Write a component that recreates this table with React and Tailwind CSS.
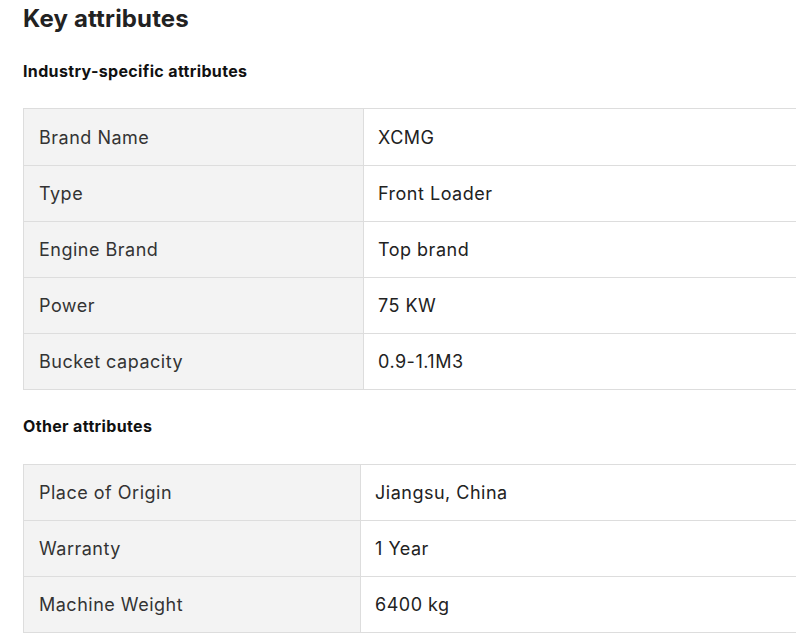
import React from "react";

const t1 = [
  ["Brand Name", "XCMG"],
  ["Type", "Front Loader"],
  ["Engine Brand", "Top brand"],
  ["Power", "75 KW"],
  ["Bucket capacity", "0.9-1.1M3"],
];
const t2 = [
  ["Place of Origin", "Jiangsu, China"],
  ["Warranty", "1 Year"],
  ["Machine Weight", "6400 kg"],
];

function Table({ rows, left, firstTall }) {
  return (
    <div className="w-[1000px] border-t border-l border-[#dddddd]">
      {rows.map(([k, v], i) => (
        <div
          key={k}
          className={`flex ${firstTall && i === 0 ? "h-[57px]" : "h-[56px]"} border-b border-[#dddddd]`}
        >
          <div
            className={`${left} shrink-0 bg-[#f3f3f3] border-r border-[#dddddd] flex items-center pl-[15px] text-[18px] tracking-[0.5px] text-[#333333]`}
          >
            {k}
          </div>
          <div className="flex-1 flex items-center pl-[14px] text-[18px] tracking-[0.5px] text-[#222222]">
            {v}
          </div>
        </div>
      ))}
    </div>
  );
}

export default function App() {
  return (
    <div
      className="w-[796px] h-[634px] overflow-hidden bg-white pl-[23px] pt-[5px]"
      style={{ fontFamily: "Inter, 'Noto Sans', sans-serif" }}
    >
      <h1 className="text-[24px] leading-[28px] font-bold tracking-[0.15px] text-[#222222]">
        Key attributes
      </h1>
      <h2 className="mt-[26px] text-[16px] leading-[24px] font-bold tracking-[0.35px] text-[#111111]">
        Industry-specific attributes
      </h2>
      <div className="mt-[25px]">
        <Table rows={t1} left="w-[340px]" firstTall />
      </div>
      <h2 className="mt-[24px] text-[16px] leading-[24px] font-bold tracking-[0.35px] text-[#111111]">
        Other attributes
      </h2>
      <div className="mt-[26px]">
        <Table rows={t2} left="w-[337px]" />
      </div>
    </div>
  );
}
